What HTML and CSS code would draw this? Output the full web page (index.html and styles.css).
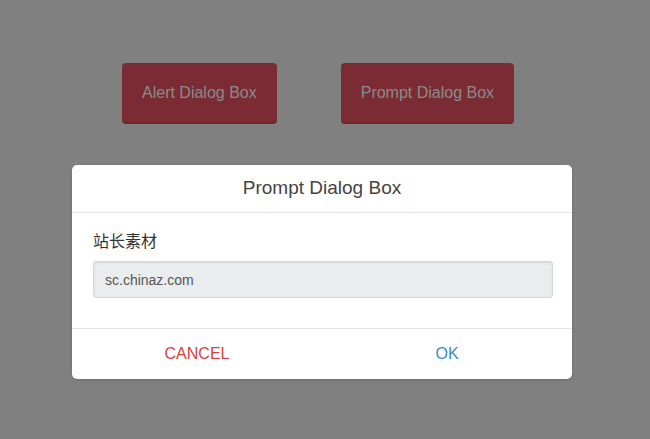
FILE: index.html
```html
<!DOCTYPE html>
<html lang="zh">
<head>
    <meta charset="UTF-8">
    <meta name="viewport" content="width=device-width, initial-scale=1.0">
    <title>Prompt Dialog Box</title>
    <link rel="stylesheet" href="styles.css">
</head>
<body>
    <div class="actions">
        <button class="btn">Alert Dialog Box</button>
        <button class="btn">Prompt Dialog Box</button>
    </div>

    <div class="overlay">
        <div class="dialog">
            <div class="dialog-head">Prompt Dialog Box</div>
            <div class="dialog-body">
                <label class="dialog-label">站长素材</label>
                <input class="dialog-input" type="text" value="sc.chinaz.com">
            </div>
            <div class="dialog-foot">
                <button class="foot-btn cancel">CANCEL</button>
                <button class="foot-btn ok">OK</button>
            </div>
        </div>
    </div>
</body>
</html>
```
FILE: styles.css
```css
html, body {
    margin: 0;
    height: 100%;
}
body {
    font-family: "Liberation Sans", Arial, "Noto Sans CJK SC", sans-serif;
    background-color: #808080;
    overflow: hidden;
}
.actions {
    display: flex;
    gap: 64px;
    padding: 63px 0 0 122px;
}
.btn {
    font-family: inherit;
    font-size: 16px;
    color: #8c8c8c;
    background-color: #7a2b33;
    border: none;
    border-bottom: 2px solid #6e252c;
    border-radius: 4px;
    height: 61px;
    padding: 0 20px;
}
.overlay {
    position: absolute;
    inset: 0;
}
.dialog {
    position: absolute;
    left: 72px;
    top: 165px;
    width: 500px;
    background-color: #fff;
    border-radius: 5px;
    box-shadow: 0 1px 3px rgba(0, 0, 0, 0.15);
}
.dialog-head {
    height: 47px;
    line-height: 46px;
    text-align: center;
    font-size: 19px;
    color: #444;
    border-bottom: 1px solid #e5e5e5;
}
.dialog-body {
    display: flex;
    flex-direction: column;
    padding: 19px 19px 30px 21px;
}
.dialog-label {
    font-size: 16px;
    color: #333;
    line-height: 20px;
    margin-bottom: 9px;
}
.dialog-input {
    box-sizing: border-box;
    height: 37px;
    font-family: inherit;
    font-size: 14px;
    color: #555;
    padding: 0 11px;
    background-color: #e9edee;
    border: 1px solid #d3d7d8;
    border-radius: 3px;
    box-shadow: inset 0 1px 3px rgba(0, 0, 0, 0.08);
    outline: none;
}
.dialog-foot {
    display: flex;
    border-top: 1px solid #e5e5e5;
}
.foot-btn {
    flex: 1;
    height: 50px;
    font-family: inherit;
    font-size: 16px;
    background: none;
    border: none;
}
.cancel {
    color: #d7433a;
}
.ok {
    color: #3a8bc8;
}
```
